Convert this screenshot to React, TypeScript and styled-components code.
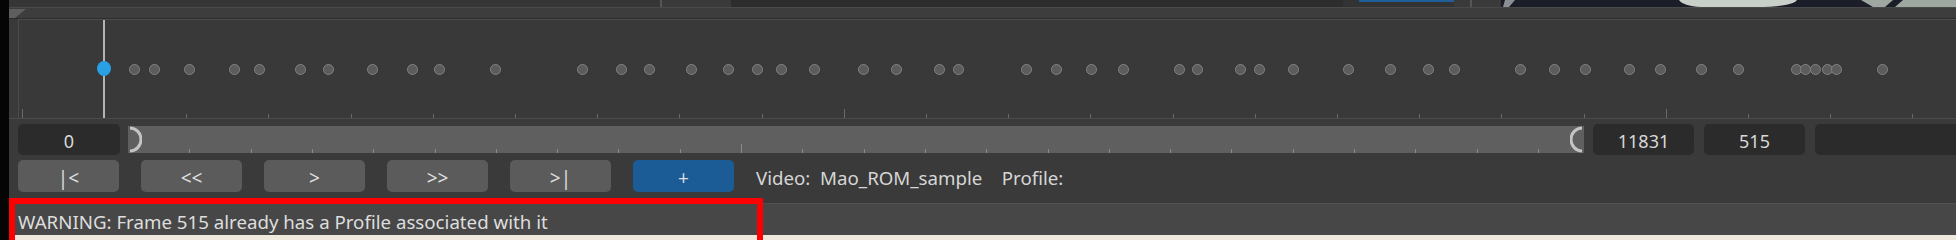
import React from 'react';
import styled, { createGlobalStyle } from 'styled-components';

const GlobalStyle = createGlobalStyle`
  html, body {
    margin: 0;
    padding: 0;
    background: #3a3a3a;
    overflow: hidden;
  }
  body {
    font-family: "Noto Sans", "DejaVu Sans", sans-serif;
    color: #dcdcdc;
  }
`;

// dot positions on the timeline (page x)
const keyframes = [
  133, 153, 188, 233, 258, 299, 327, 371, 411, 438, 494, 581, 620, 648, 690, 727, 756, 780, 813,
  862, 895, 938, 957, 1025, 1055, 1090, 1122, 1178, 1196, 1239, 1258, 1292, 1347, 1389, 1427,
  1453, 1519, 1553, 1584, 1628, 1659, 1700, 1737, 1795, 1804, 1814, 1826, 1835, 1881,
];

const Page = styled.div`
  display: flex;
  width: 1956px;
  height: 240px;
  overflow: hidden;
`;

const LeftEdge = styled.div`
  width: 9px;
  flex: none;
  background: #050505;
`;

const Main = styled.div`
  flex: 1;
  display: flex;
  flex-direction: column;
  min-width: 0;
  background: #3a3a3a;
`;

const TopStrip = styled.div`
  display: flex;
  flex-direction: column;
  height: 19px;
  flex: none;
`;

const StripRow = styled.div`
  display: flex;
  height: 7px;
`;

const Seg = styled.div<{ $w?: number; $bg: string }>`
  flex: ${p => (p.$w ? 'none' : '1')};
  width: ${p => (p.$w ? `${p.$w}px` : 'auto')};
  background: ${p => p.$bg};
  display: flex;
`;

const BlueTab = styled.div`
  width: 95px;
  background: linear-gradient(#1f5f99 0 2px, #333 2px);
`;

const Line = styled.div<{ $c: string }>`
  height: 1px;
  background: ${p => p.$c};
`;

const GripBand = styled.div`
  height: 10px;
  background: #3d3d3d;
  display: flex;
`;

const TimelineWrap = styled.div`
  padding-left: 9px;
  height: 99px;
  flex: none;
  border-bottom: 1px solid #4c4c4c;
`;

const Timeline = styled.div`
  position: relative;
  height: 99px;
  background: #393939;
  border-top: 1px solid #4e4e4e;
  border-left: 1px solid #4b4b4b;
  box-sizing: border-box;
  overflow: hidden;
`;

const Playhead = styled.div<{ $x: number }>`
  position: absolute;
  left: ${p => p.$x - 1}px;
  top: 0;
  bottom: 0;
  width: 2px;
  background: #b4b4b4;
`;

const Dot = styled.div<{ $x: number }>`
  position: absolute;
  left: ${p => p.$x - 5}px;
  top: 44px;
  width: 11px;
  height: 11px;
  border-radius: 50%;
  box-sizing: border-box;
  background: #5c5c5c;
  border: 1.5px solid #828282;
`;

const ActiveDot = styled.div<{ $x: number }>`
  position: absolute;
  left: ${p => p.$x - 7}px;
  top: 41px;
  width: 14px;
  height: 15px;
  border-radius: 50%;
  background: #2a9fe4;
`;

const Tick = styled.div<{ $x: number; $major?: boolean; $c?: string }>`
  position: absolute;
  left: ${p => p.$x}px;
  bottom: 0;
  width: 1px;
  height: ${p => (p.$major ? 9 : 4)}px;
  background: ${p => p.$c || '#6a6a6a'};
`;

const SliderRow = styled.div`
  display: flex;
  align-items: center;
  height: 31px;
  margin-top: 5px;
  padding-left: 9px;
  flex: none;
`;

const NumBox = styled.div<{ $w: number; $ml?: number }>`
  width: ${p => p.$w}px;
  flex: none;
  height: 31px;
  margin-left: ${p => p.$ml || 0}px;
  background: #2b2b2b;
  border-radius: 5px;
  display: flex;
  align-items: center;
  justify-content: center;
  padding-top: 2px;
  box-sizing: border-box;
  font-size: 18px;
  color: #d8d8d8;
`;

const Track = styled.div`
  position: relative;
  width: 1456px;
  flex: none;
  height: 27px;
  margin-left: 8px;
  background: #5f5f5f;
`;

const Handle = styled.svg<{ $side: 'left' | 'right' }>`
  position: absolute;
  top: 0;
  ${p => (p.$side === 'left' ? 'left: 0;' : 'right: 0;')}
`;

const ButtonRow = styled.div`
  display: flex;
  align-items: center;
  gap: 22px;
  height: 32px;
  margin-top: 5px;
  padding-left: 9px;
  flex: none;
`;

const NavButton = styled.div<{ $primary?: boolean }>`
  width: 101px;
  height: 32px;
  flex: none;
  border-radius: 5px;
  background: ${p => (p.$primary ? '#1c5c96' : '#5b5b5b')};
  color: #dedede;
  font-size: 19px;
  display: flex;
  align-items: center;
  justify-content: center;
  padding-top: 4px;
  box-sizing: border-box;
`;

const InfoText = styled.div`
  font-size: 18.7px;
  color: #d6d6d6;
  white-space: pre;
  padding-top: 3px;
`;

const StatusBar = styled.div`
  position: relative;
  margin-top: 11px;
  height: 32px;
  flex: none;
  background: #474747;
  border-top: 1px solid #525252;
  box-sizing: border-box;
  display: flex;
  align-items: center;
  padding: 4px 0 0 9px;
  font-size: 18.7px;
  color: #dedede;
`;

const Highlight = styled.div`
  position: absolute;
  left: 0;
  top: -6px;
  width: 754px;
  height: 48px;
  border: 6px solid #ff0000;
  box-sizing: border-box;
`;

const Bottom = styled.div`
  height: 5px;
  background: #efe8dc;
  flex: none;
`;

const VideoFrame = () => (
  <svg width="455" height="7" viewBox="0 0 455 7">
    <rect width="455" height="7" fill="#1b1e29" />
    <path d="M4 0 L14 0 L8 7 L2 7 Z" fill="#8a8f96" />
    <path d="M178 0 L296 0 Q292 6 262 7 L200 7 Q182 6 178 0 Z" fill="#c9cfc9" />
    <path d="M360 0 L455 0 L455 7 L372 7 Z" fill="#9ea7a0" />
    <path d="M392 0 L402 0 L394 7 L384 7 Z" fill="#1b1e29" />
  </svg>
);

const App = () => {
  const panelLeft = 18;
  const timelineTicks = Array.from({ length: 24 }, (_, k) => k);
  const trackTicks = Array.from({ length: 23 }, (_, k) => k + 1);

  return (
    <Page>
      <GlobalStyle />
      <LeftEdge />
      <Main>
        <TopStrip>
          <StripRow>
            <Seg $w={651} $bg="#363636" />
            <Seg $w={2} $bg="#565656" />
            <Seg $w={69} $bg="#3a3a3a" />
            <Seg $w={612} $bg="#2d2d2d" />
            <Seg $w={16} $bg="#333" />
            <BlueTab />
            <Seg $w={16} $bg="#3a3a3a" />
            <Seg $w={2} $bg="#565656" />
            <Seg $w={29} $bg="#3a3a3a" />
            <Seg $bg="#1b1e29">
              <VideoFrame />
            </Seg>
          </StripRow>
          <Line $c="#4a4a4a" />
          <GripBand>
            <svg width="18" height="10" viewBox="0 0 18 10">
              <polygon points="0,1 17,1 6,10 0,10" fill="#5e5e5e" />
            </svg>
          </GripBand>
          <Line $c="#2c2c2c" />
        </TopStrip>

        <TimelineWrap>
          <Timeline>
            {timelineTicks.map(k => (
              <Tick key={k} $x={Math.round(2.8 + 82.2 * k)} $major={k % 10 === 0} />
            ))}
            <Playhead $x={103 - panelLeft} />
            {keyframes.map(x => (
              <Dot key={x} $x={x - panelLeft} />
            ))}
            <ActiveDot $x={103 - panelLeft} />
          </Timeline>
        </TimelineWrap>

        <SliderRow>
          <NumBox $w={102}>0</NumBox>
          <Track>
            {trackTicks.map(k => (
              <Tick key={k} $x={Math.round(61.3 * k)} $major={k === 10} $c="#8a8a8a" />
            ))}
            <Handle $side="left" width="14" height="27" viewBox="0 0 14 27">
              <path d="M2 2 A11 11.5 0 0 1 2 25" fill="none" stroke="#c4c4c4" strokeWidth="3" />
            </Handle>
            <Handle $side="right" width="14" height="27" viewBox="0 0 14 27">
              <path d="M12 2 A11 11.5 0 0 0 12 25" fill="none" stroke="#c4c4c4" strokeWidth="3" />
            </Handle>
          </Track>
          <NumBox $w={101} $ml={9}>11831</NumBox>
          <NumBox $w={101} $ml={10}>515</NumBox>
          <NumBox $w={160} $ml={10} />
        </SliderRow>

        <ButtonRow>
          <NavButton>|&lt;</NavButton>
          <NavButton>&lt;&lt;</NavButton>
          <NavButton>&gt;</NavButton>
          <NavButton>&gt;&gt;</NavButton>
          <NavButton>&gt;|</NavButton>
          <NavButton $primary>+</NavButton>
          <InfoText>{'Video:  Mao_ROM_sample    Profile:'}</InfoText>
        </ButtonRow>

        <StatusBar>
          WARNING: Frame 515 already has a Profile associated with it
          <Highlight />
        </StatusBar>
        <Bottom />
      </Main>
    </Page>
  );
};

export default App;
